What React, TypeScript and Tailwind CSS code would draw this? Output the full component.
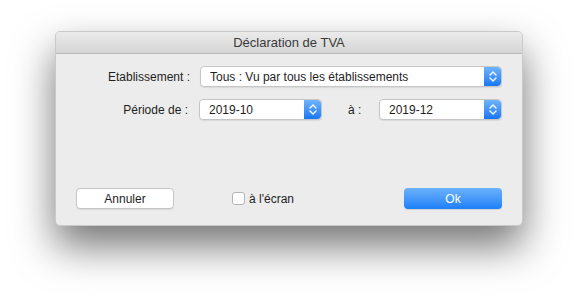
const font = { fontFamily: '"Liberation Sans", Arial, sans-serif' };

function Stepper() {
  return (
    <div className="flex w-[17px] shrink-0 items-center justify-center self-stretch rounded-r-[4px] bg-gradient-to-b from-[#6db4fb] to-[#1576f4]">
      <svg width="8" height="13" viewBox="0 0 8 13" fill="none">
        <path d="M1 5 L4 2 L7 5" stroke="white" strokeWidth="1.4" strokeLinecap="round" strokeLinejoin="round" />
        <path d="M1 8 L4 11 L7 8" stroke="white" strokeWidth="1.4" strokeLinecap="round" strokeLinejoin="round" />
      </svg>
    </div>
  );
}

function Select({ value, width }: { value: string; width: string }) {
  return (
    <div className={`flex h-[21px] ${width} items-stretch rounded-[4px] border border-[#c6c6c6] bg-white shadow-[0_1px_1px_rgba(0,0,0,0.08)]`}>
      <div className="flex flex-1 items-center pl-[9px] text-[12px] text-[#1e1e1e]">{value}</div>
      <Stepper />
    </div>
  );
}

export default function App() {
  return (
    <div className="h-[306px] w-[578px] bg-white pl-[55px] pt-[31px]" style={font}>
      <div className="flex h-[195px] w-[468px] flex-col overflow-hidden rounded-[5px] border border-[#c9c9c9] bg-[#ececec] shadow-[0_20px_40px_rgba(0,0,0,0.55)]">
        <div className="flex h-[22px] shrink-0 items-center justify-center border-b border-[#b9b9b9] bg-gradient-to-b from-[#ebebeb] to-[#d5d5d5] text-[13px] text-[#3a3a3a]">
          Déclaration de TVA
        </div>

        <div className="mt-[12px] flex items-center">
          <div className="w-[134px] text-right text-[12px] text-[#1e1e1e]">Etablissement :</div>
          <div className="ml-[10px]">
            <Select value="Tous : Vu par tous les établissements" width="w-[302px]" />
          </div>
        </div>

        <div className="mt-[12px] flex items-center">
          <div className="w-[132px] text-right text-[12px] text-[#1e1e1e]">Période de :</div>
          <div className="ml-[11px]">
            <Select value="2019-10" width="w-[123px]" />
          </div>
          <div className="ml-[26px] w-[31px] text-[12px] text-[#1e1e1e]">à :</div>
          <div>
            <Select value="2019-12" width="w-[123px]" />
          </div>
        </div>

        <div className="mt-auto mb-[16px] flex items-center px-[20px]">
          <button className="h-[21px] w-[98px] rounded-[4px] border border-[#c6c6c6] bg-white text-[12px] text-[#1e1e1e] shadow-[0_1px_1px_rgba(0,0,0,0.08)]">
            Annuler
          </button>
          <label className="ml-[58px] flex items-center gap-[4px] text-[12px] text-[#1e1e1e]">
            <span className="h-[13px] w-[13px] rounded-[3px] border border-[#b5b5b5] bg-white" />
            à l'écran
          </label>
          <button className="ml-auto h-[21px] w-[98px] rounded-[4px] bg-gradient-to-b from-[#6ab2fb] to-[#1a7ff7] text-[12px] text-white shadow-[0_1px_1px_rgba(0,0,0,0.1)]">
            Ok
          </button>
        </div>
      </div>
    </div>
  );
}
